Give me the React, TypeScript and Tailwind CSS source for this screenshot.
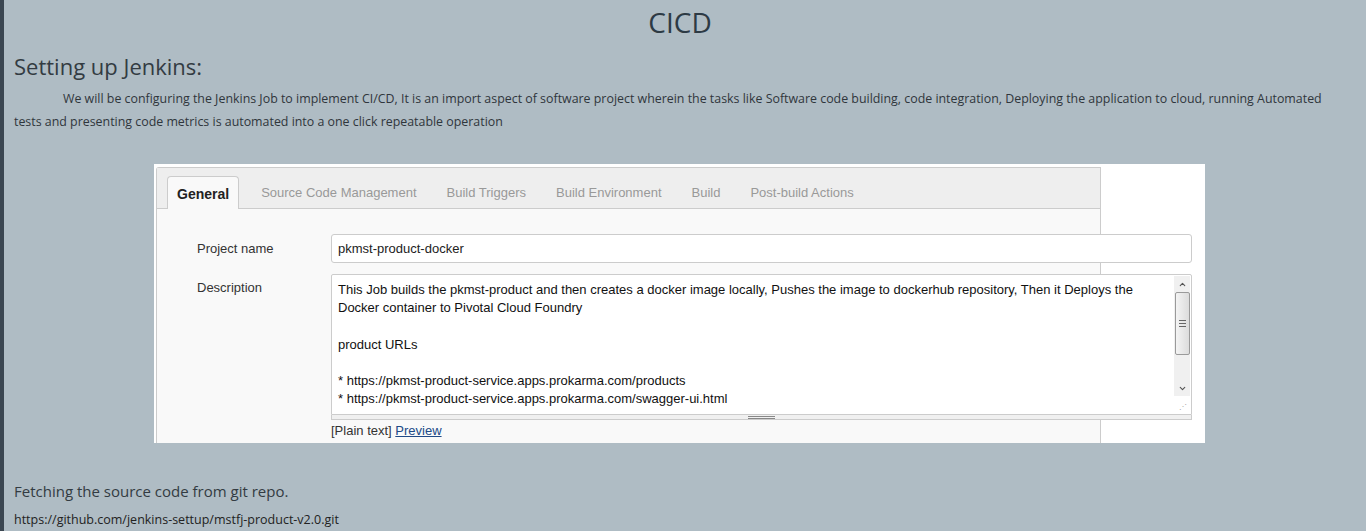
import { ChevronDown, ChevronUp } from 'lucide-react'

const tabs = ['Source Code Management', 'Build Triggers', 'Build Environment', 'Build', 'Post-build Actions']

const description = [
  'This Job builds the pkmst-product and then creates a docker image locally, Pushes the image to dockerhub repository, Then it Deploys the',
  'Docker container to Pivotal Cloud Foundry',
  '',
  'product URLs',
  '',
  '* https://pkmst-product-service.apps.prokarma.com/products',
  '* https://pkmst-product-service.apps.prokarma.com/swagger-ui.html',
]

function Scrollbar() {
  return (
    <div className="flex w-[16px] flex-1 flex-col items-center bg-[#f0f0f0]">
      <div className="flex h-[16px] w-full items-center justify-center text-[#555]">
        <ChevronUp size={9} strokeWidth={3} />
      </div>
      <div className="flex h-[63px] w-[15px] flex-col items-center justify-center gap-[2px] rounded-[2px] border border-[#9a9a9a] bg-gradient-to-r from-[#f4f4f4] to-[#dcdcdc]">
        <span className="block h-px w-[7px] bg-[#666]" />
        <span className="block h-px w-[7px] bg-[#666]" />
        <span className="block h-px w-[7px] bg-[#666]" />
      </div>
      <div className="flex-1" />
      <div className="flex h-[16px] w-full items-center justify-center text-[#555]">
        <ChevronDown size={9} strokeWidth={3} />
      </div>
    </div>
  )
}

function JenkinsShot() {
  return (
    <div className="ml-[140px] mt-[31px] flex h-[279px] w-[1051px] overflow-hidden bg-white pl-[2px] pt-[3px]">
      <div className="w-[945px] shrink-0 rounded-tl-[3px] border-l border-r border-t border-[#cccccc] bg-[#f9f9f9] font-['Liberation_Sans',Arial,sans-serif]">
        <div className="flex h-[41px] items-end border-b border-[#cccccc] bg-[#eeeeee] pl-[10px]">
          <div className="-mb-px mr-[7px] flex h-[33px] items-center rounded-t-[4px] border border-b-0 border-[#cccccc] bg-[#f9f9f9] px-[9px] pt-[2px] text-[14px] font-bold text-[#222]">
            General
          </div>
          {tabs.map(tab => (
            <div key={tab} className="flex h-[33px] items-center px-[15px] pt-[2px] text-[13px] text-[#999999]">
              {tab}
            </div>
          ))}
        </div>

        <div className="mt-[25px] flex items-start">
          <div className="w-[174px] shrink-0 pl-[40px] text-[13px] leading-[29px] text-[#333]">Project name</div>
          <div className="flex h-[29px] w-[861px] shrink-0 items-center rounded-[3px] border border-[#cccccc] bg-white px-[6px] text-[13px] text-[#222]">
            pkmst-product-docker
          </div>
        </div>

        <div className="mt-[11px] flex items-start">
          <div className="w-[174px] shrink-0 pl-[40px] pt-[5px] text-[13px] leading-[18px] text-[#333]">Description</div>
          <div className="w-[861px] shrink-0">
            <div className="flex h-[141px] rounded-t-[2px] border border-[#cccccc] bg-white">
              <div className="flex-1 px-[6px] pt-[6px] text-[13px] leading-[18.2px] text-[#111]">
                {description.map((line, i) => (
                  <div key={i} className="h-[18.2px] whitespace-nowrap">{line}</div>
                ))}
              </div>
              <div className="flex flex-col pr-px pt-px">
                <Scrollbar />
                <div className="relative h-[18px] w-[16px]">
                  <span className="absolute bottom-[3px] right-[3px] text-[8px] leading-none text-[#aaa]">⋰</span>
                </div>
              </div>
            </div>
            <div className="flex h-[5px] items-center justify-center border-x border-b border-[#cccccc] bg-[#f0f0f0]">
              <div className="flex w-[27px] flex-col gap-px">
                <span className="block h-px bg-[#888]" />
                <span className="block h-px bg-[#888]" />
              </div>
            </div>
            <div className="pt-[2px] text-[13px] leading-[18px] text-[#333]">
              [Plain text] <span className="text-[#204a87] underline">Preview</span>
            </div>
          </div>
        </div>
      </div>
    </div>
  )
}

export default function App() {
  return (
    <div className="min-h-[531px] w-[1366px] border-l-[4px] border-[#3b4651] bg-[#afbcc4] font-['Open_Sans',sans-serif] text-[#2f363c]">
      <div className="pl-[10px] pr-[20px] pt-[2px]">
        <h1 className="text-center text-[28px] leading-[40px] text-[#2d3a44]">CICD</h1>
        <h2 className="mt-[9px] text-[22px] leading-[30px] text-[#333b42]">Setting up Jenkins:</h2>
        <p className="mt-[6px] indent-[49px] text-[12.4px] leading-[23px]">
          We will be configuring the Jenkins Job to implement CI/CD, It is an import aspect of software project wherein the tasks like Software code building, code integration, Deploying the application to cloud, running Automated tests and presenting code metrics is automated into a one click repeatable operation
        </p>
        <JenkinsShot />
        <p className="mt-[37px] text-[15px] leading-[22px] text-[#333b42]">Fetching the source code from git repo.</p>
        <p className="mt-[8px] text-[12.5px] leading-[20px] text-[#222]">https://github.com/jenkins-settup/mstfj-product-v2.0.git</p>
      </div>
    </div>
  )
}
